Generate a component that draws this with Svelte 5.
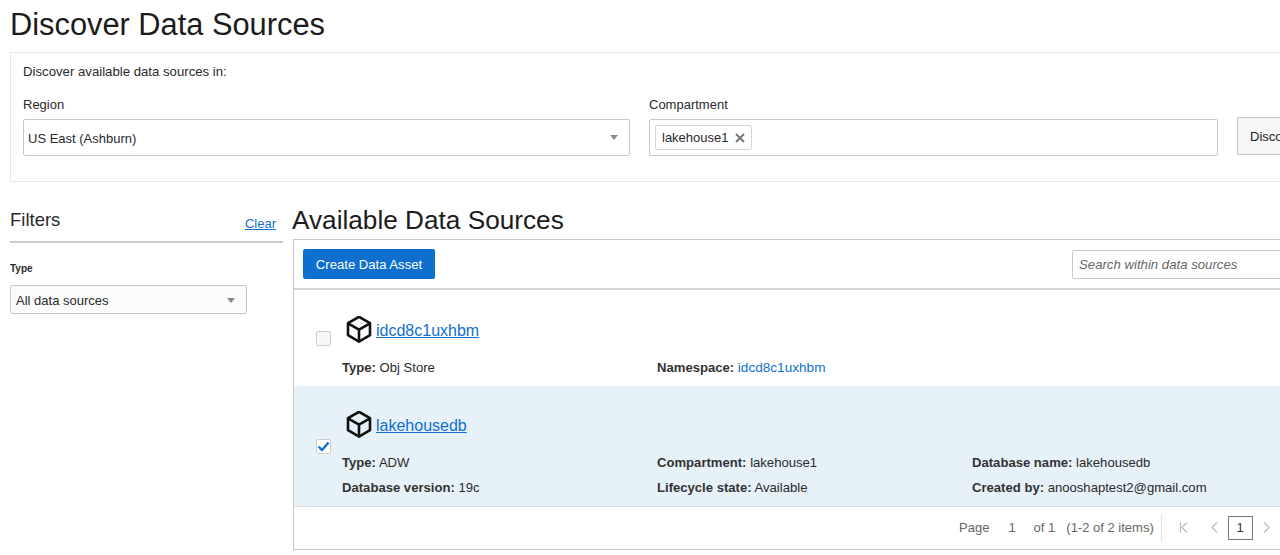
<script>
    const sources = [
        {
            name: 'idcd8c1uxhbm',
            checked: false,
            meta: [
                { label: 'Type', value: 'Obj Store' },
                { label: 'Namespace', value: 'idcd8c1uxhbm', link: true }
            ]
        },
        {
            name: 'lakehousedb',
            checked: true,
            meta: [
                { label: 'Type', value: 'ADW' },
                { label: 'Compartment', value: 'lakehouse1' },
                { label: 'Database name', value: 'lakehousedb' },
                { label: 'Database version', value: '19c' },
                { label: 'Lifecycle state', value: 'Available' },
                { label: 'Created by', value: 'anooshaptest2@gmail.com' }
            ]
        }
    ];
</script>

<div class="viewport">
<div class="page">
    <h1>Discover Data Sources</h1>

    <section class="discover">
        <p class="intro">Discover available data sources in:</p>
        <div class="fields">
            <div class="field region">
                <span class="label">Region</span>
                <div class="input">
                    <span>US East (Ashburn)</span>
                    <i class="caret"></i>
                </div>
            </div>
            <div class="field compartment">
                <span class="label">Compartment</span>
                <div class="input">
                    <span class="chip">lakehouse1
                        <svg width="10" height="10" viewBox="0 0 10 10"><path d="M1 1l8 8M9 1l-8 8" stroke="#777" stroke-width="2" /></svg>
                    </span>
                </div>
            </div>
            <button class="discover-btn">Discover</button>
        </div>
    </section>

    <div class="columns">
        <aside class="filters">
            <div class="filters-head">
                <h3>Filters</h3>
                <a href="#clear">Clear</a>
            </div>
            <div class="type-label">Type</div>
            <div class="type-select">
                <span>All data sources</span>
                <i class="caret"></i>
            </div>
        </aside>

        <main class="results">
            <h2>Available Data Sources</h2>
            <div class="table">
                <div class="toolbar">
                    <button class="primary">Create Data Asset</button>
                    <div class="search">Search within data sources</div>
                </div>

                {#each sources as source}
                    <div class="row" class:selected={source.checked}>
                        <span class="check">
                            {#if source.checked}
                                <svg width="13" height="11" viewBox="0 0 13 11"><path d="M1.5 5.5l3.5 3.5 6.5-7.5" fill="none" stroke="#0f6fcf" stroke-width="2.4" /></svg>
                            {/if}
                        </span>
                        <div class="title">
                            <svg class="cube" width="28" height="28" viewBox="0 1 28 28" fill="none" stroke="#111" stroke-width="2.6" stroke-linejoin="round">
                                <path d="M14 1.8L25 8.2V20.2L14 26.6L3 20.2V8.2Z" />
                                <path d="M3.4 8.6L14 14.6L24.6 8.6M14 14.6V26" />
                            </svg>
                            <a href="#source">{source.name}</a>
                        </div>
                        <div class="meta">
                            {#each source.meta as item}
                                <div><b>{item.label}:</b> {#if item.link}<a href="#ns">{item.value}</a>{:else}{item.value}{/if}</div>
                            {/each}
                        </div>
                    </div>
                {/each}

                <div class="pager">
                    <span class="pg-text">Page</span>
                    <span class="pg-num">1</span>
                    <span class="pg-text">of 1</span>
                    <span class="pg-items">(1-2 of 2 items)</span>
                    <span class="pg-sep"></span>
                    <svg width="10" height="11" viewBox="0 0 10 11" fill="none" stroke="#bbb" stroke-width="1.2"><path d="M1.5 0.5v10M8 0.5L3 5.5l5 5" /></svg>
                    <svg class="prev" width="7" height="11" viewBox="0 0 7 11" fill="none" stroke="#bbb" stroke-width="1.2"><path d="M6 0.5L1 5.5l5 5" /></svg>
                    <span class="pg-current">1</span>
                    <svg width="7" height="11" viewBox="0 0 7 11" fill="none" stroke="#bbb" stroke-width="1.2"><path d="M1 0.5L6 5.5l-5 5" /></svg>
                </div>
            </div>
        </main>
    </div>
</div>
</div>

<style>
    :global(body) {
        background: #fff;
    }

    .viewport {
        width: 1280px;
        height: 555px;
        overflow: hidden;
    }

    .page {
        width: 1500px;
        padding-left: 10px;
        box-sizing: border-box;
        font-family: "Liberation Sans", Arial, sans-serif;
        color: #2a2a2a;
        font-size: 13px;
    }

    h1 {
        margin: 0;
        height: 52px;
        font-size: 30.8px;
        font-weight: 400;
        line-height: 50px;
        color: #1c1c1c;
    }

    .discover {
        height: 130px;
        box-sizing: border-box;
        border: 1px solid #e6e6e6;
        padding: 11px 12px 0;
    }

    .intro {
        margin: 0;
        line-height: 16px;
        font-size: 13.2px;
    }

    .fields {
        display: flex;
        margin-top: 17px;
        align-items: flex-end;
    }

    .field {
        display: flex;
        flex-direction: column;
    }

    .label {
        line-height: 16px;
        margin-bottom: 6px;
        font-size: 13px;
    }

    .region {
        width: 607px;
        margin-right: 19px;
    }

    .compartment {
        width: 569px;
        margin-right: 19px;
    }

    .input {
        height: 37px;
        box-sizing: border-box;
        border: 1px solid #c8c8c8;
        border-radius: 2px;
        display: flex;
        align-items: center;
        justify-content: space-between;
        padding: 0 5px;
    }

    .region .input {
        padding: 0 11px 0 4px;
    }

    .region .input span {
        margin-top: 1px;
    }

    .caret {
        width: 0;
        height: 0;
        border-left: 4.5px solid transparent;
        border-right: 4.5px solid transparent;
        border-top: 5px solid #8a8a8a;
    }

    .chip {
        display: flex;
        align-items: center;
        gap: 6px;
        height: 25px;
        box-sizing: border-box;
        border: 1px solid #d6d6d6;
        border-radius: 2px;
        padding: 0 6px;
    }

    .discover-btn {
        width: 120px;
        height: 38px;
        margin-bottom: 0;
        background: #f7f7f7;
        border: 1px solid #c4c4c4;
        border-radius: 2px;
        font: 13px "Liberation Sans", Arial, sans-serif;
        color: #222;
        text-align: left;
        padding-left: 12px;
        position: relative;
        top: -1px;
    }

    .columns {
        display: flex;
        margin-top: 23px;
    }

    .filters {
        width: 273px;
        margin-right: 9px;
    }

    .filters-head {
        display: flex;
        justify-content: space-between;
        align-items: flex-end;
        height: 36px;
        border-bottom: 2px solid #ccc;
        padding-right: 7px;
    }

    h3 {
        margin: 0 0 6px;
        font-size: 18.5px;
        font-weight: 400;
        line-height: 30px;
    }

    a {
        color: #0f6fcf;
    }

    .filters-head a {
        font-size: 13px;
        line-height: 24px;
        margin-bottom: 5px;
    }

    .type-label {
        margin-top: 20px;
        font-size: 10px;
        font-weight: 700;
        line-height: 12px;
    }

    .type-select {
        margin-top: 10px;
        width: 237px;
        height: 29px;
        box-sizing: border-box;
        border: 1px solid #c8c8c8;
        border-radius: 2px;
        background: #fbfbfb;
        display: flex;
        align-items: center;
        justify-content: space-between;
        padding: 1px 11px 0 5px;
    }

    .results {
        width: 1200px;
    }

    h2 {
        margin: 0;
        height: 34px;
        font-size: 26.2px;
        font-weight: 400;
        line-height: 30px;
        color: #1c1c1c;
    }

    .table {
        width: 1100px;
        margin-left: 1px;
        height: 311px;
        box-sizing: border-box;
        border: 1px solid #c8c8c8;
    }

    .toolbar {
        height: 50px;
        box-sizing: border-box;
        border-bottom: 2px solid #d4d4d4;
        display: flex;
        align-items: center;
        justify-content: space-between;
        padding-left: 9px;
    }

    .primary {
        width: 132px;
        height: 30px;
        background: #0f6fcf;
        color: #fff;
        border: 0;
        border-radius: 2px;
        font: 13.1px "Liberation Sans", Arial, sans-serif;
        padding: 0;
    }

    .search {
        width: 320px;
        height: 29px;
        box-sizing: border-box;
        border: 1px solid #c8c8c8;
        border-radius: 2px;
        font-style: italic;
        font-size: 13.2px;
        color: #666;
        line-height: 27px;
        padding-left: 6px;
        margin-top: 1px;
    }

    .row {
        position: relative;
        height: 96px;
        box-sizing: border-box;
        padding: 26px 0 0 48px;
    }

    .row.selected {
        height: 121px;
        background: #e6f1f8;
        border-bottom: 1px solid #dedede;
        padding-top: 25px;
    }

    .check {
        position: absolute;
        left: 22px;
        top: 41px;
        width: 15px;
        height: 15px;
        box-sizing: border-box;
        border: 1px solid #ccc;
        border-radius: 2px;
        background: #f8f8f8;
        display: flex;
        align-items: center;
        justify-content: center;
    }

    .selected .check {
        top: 53px;
        background: #fff;
    }

    .title {
        display: flex;
        align-items: center;
        gap: 3px;
        height: 28px;
        font-size: 16px;
    }

    .title a {
        margin-top: 1px;
    }

    .cube {
        margin-left: 3px;
    }

    .meta {
        display: grid;
        grid-template-columns: repeat(3, 315px);
        row-gap: 9px;
        margin-top: 16px;
        line-height: 16px;
        font-size: 13.1px;
    }

    .meta a {
        text-decoration: none;
        font-size: 13.6px;
    }

    .meta b {
        color: #333;
    }

    .pager {
        height: 41px;
        display: flex;
        align-items: center;
        padding-left: 665px;
        color: #666;
        font-size: 13px;
    }

    .pg-num {
        margin: 0 18px 0 19px;
    }

    .pg-items {
        margin-left: 11px;
    }

    .pg-sep {
        width: 1px;
        height: 28px;
        background: #e2e2e2;
        margin: 0 17px 0 7px;
    }

    .prev {
        margin-left: 22px;
    }

    .pg-current {
        width: 25px;
        height: 24px;
        box-sizing: border-box;
        border: 1px solid #777;
        text-align: center;
        line-height: 22px;
        color: #333;
        margin: 0 10px 0 10px;
    }
</style>
